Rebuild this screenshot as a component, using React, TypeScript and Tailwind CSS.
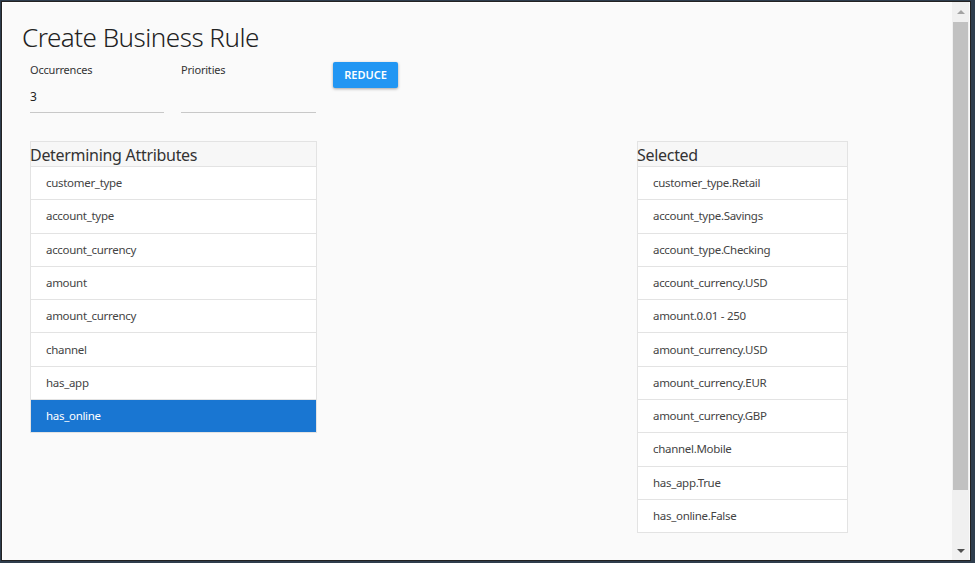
import React from "react";

const left = [
  "customer_type",
  "account_type",
  "account_currency",
  "amount",
  "amount_currency",
  "channel",
  "has_app",
  "has_online",
];

const right = [
  "customer_type.Retail",
  "account_type.Savings",
  "account_type.Checking",
  "account_currency.USD",
  "amount.0.01 - 250",
  "amount_currency.USD",
  "amount_currency.EUR",
  "amount_currency.GBP",
  "channel.Mobile",
  "has_app.True",
  "has_online.False",
];

function Panel({
  title,
  items,
  width,
  selected,
}: {
  title: string;
  items: string[];
  width: string;
  selected?: string;
}) {
  return (
    <div className={`${width} border border-[#e3e3e3] bg-[#f7f7f7] flex flex-col`}>
      <div className="h-[24px] text-[16px] tracking-[-0.3px] leading-[26px] text-[#333] -ml-[1px]">{title}</div>
      {items.map((it) => (
        <div
          key={it}
          className={`h-[33.3px] flex items-center pl-[15px] pb-[1px] text-[11.5px] tracking-[-0.3px] border-t border-[#e3e3e3] ${
            it === selected ? "bg-[#1976d2] text-white" : "bg-white text-[#444]"
          }`}
        >
          {it}
        </div>
      ))}
    </div>
  );
}

export default function App() {
  return (
    <div
      className="w-[975px] h-[563px] bg-[#2e3d4d] pt-[1px] pl-[1px] overflow-hidden"
      style={{ fontFamily: '"Noto Sans", "Open Sans", sans-serif' }}
    >
      <div className="w-[970px] h-[560px] border border-[#222] bg-[#fafafa] flex">
        <div className="flex-1 border-l border-t border-white pl-[19px] pt-[16px]">
          <h1 className="text-[26px] leading-[36px] text-[#222] font-light tracking-[-0.5px]">
            Create Business Rule
          </h1>
          <div className="flex items-start pl-[8px] mt-[7px]">
            <div className="w-[134px] border-b border-[#c8c8c8] h-[51px] flex flex-col">
              <span className="text-[11px] tracking-[-0.2px] text-[#333] leading-[14px] mt-[1px]">Occurrences</span>
              <span className="text-[12px] text-[#222] leading-[16px] mt-[12px]">3</span>
            </div>
            <div className="w-[135px] ml-[17px] border-b border-[#c8c8c8] h-[51px]">
              <span className="text-[11px] tracking-[-0.2px] text-[#333] leading-[14px] block mt-[1px]">Priorities</span>
            </div>
            <button className="ml-[17px] mt-[0px] w-[65px] h-[26px] bg-[#2196f3] text-white text-[11px] font-semibold rounded-[2px] shadow-[0_1px_3px_rgba(0,0,0,0.35)]">
              REDUCE
            </button>
          </div>
          <div className="flex items-start pl-[8px] mt-[28px]">
            <Panel title="Determining Attributes" items={left} width="w-[287px]" selected="has_online" />
            <div className="ml-[320px]">
              <Panel title="Selected" items={right} width="w-[211px]" />
            </div>
          </div>
        </div>
        <div className="w-[17px] bg-[#f0f0f0] flex flex-col items-center mr-[1px]">
          <div className="h-[20px] flex items-center justify-center">
            <div className="w-0 h-0 border-l-[4px] border-r-[4px] border-b-[4px] border-l-transparent border-r-transparent border-b-[#a3a3a3]" />
          </div>
          <div className="w-[15px] h-[468px] bg-[#c1c1c1]" />
          <div className="flex-1" />
          <div className="h-[18px] flex items-center justify-center">
            <div className="w-0 h-0 border-l-[4px] border-r-[4px] border-t-[4px] border-l-transparent border-r-transparent border-t-[#505050]" />
          </div>
        </div>
      </div>
    </div>
  );
}
